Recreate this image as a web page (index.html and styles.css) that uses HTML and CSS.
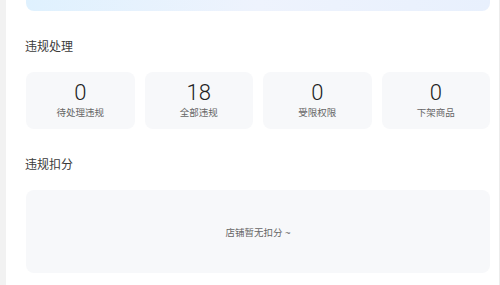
FILE: index.html
```html
<!DOCTYPE html>
<html lang="zh-CN">
<head>
  <meta charset="UTF-8" />
  <meta name="viewport" content="width=device-width, initial-scale=1.0"/>
  <title>违规处理</title>
  <link rel="stylesheet" href="styles.css">
</head>
<body>
  <div class="panel">
    <div class="banner"></div>

    <h2 class="section-title">违规处理</h2>
    <div class="stats">
      <div class="stat-card">
        <div class="stat-num">0</div>
        <div class="stat-label">待处理违规</div>
      </div>
      <div class="stat-card">
        <div class="stat-num">18</div>
        <div class="stat-label">全部违规</div>
      </div>
      <div class="stat-card">
        <div class="stat-num">0</div>
        <div class="stat-label">受限权限</div>
      </div>
      <div class="stat-card">
        <div class="stat-num">0</div>
        <div class="stat-label">下架商品</div>
      </div>
    </div>

    <h2 class="section-title">违规扣分</h2>
    <div class="empty-box">店铺暂无扣分 ~</div>
  </div>
</body>
</html>
```

FILE: styles.css
```css
html, body {
  margin: 0;
  padding: 0;
}

body {
  font-family: "Liberation Sans", "Noto Sans CJK SC", sans-serif;
  background: #f2f2f2;
  color: #333;
  height: 285px;
  overflow: hidden;
}

/* panneau blanc principal */
.panel {
  box-sizing: border-box;
  width: 494px;
  height: 100%;
  margin-left: 6px;
  padding: 0 9px 0 20px;
  background: #fff;
  border-right: 1px solid #ececec;
}

.banner {
  height: 11px;
  border-radius: 0 0 8px 8px;
  background: linear-gradient(90deg, #dff1fe, #eef3fd 50%, #e8f0fd);
}

.section-title {
  margin: 28px 0 0 -1px;
  font-size: 12px;
  line-height: 16px;
  font-weight: normal;
  color: #3a3a3a;
}

.stats {
  display: grid;
  grid-template-columns: repeat(4, 1fr);
  gap: 10px;
  margin-top: 17px;
}

.stat-card {
  display: flex;
  flex-direction: column;
  align-items: center;
  padding: 9px 0;
  background: #f7f8fa;
  border-radius: 8px;
}

.stat-num {
  font-family: Roboto, "Liberation Sans", sans-serif;
  font-size: 22px;
  font-weight: 300;
  line-height: 24px;
  color: #222;
}

.stat-label {
  margin-top: 1px;
  font-size: 9.5px;
  line-height: 14px;
  color: #666;
}

.empty-box {
  display: flex;
  align-items: center;
  justify-content: center;
  height: 83px;
  margin-top: 17px;
  background: #f7f8fa;
  border-radius: 8px;
  font-size: 9.5px;
  color: #666;
}
```
